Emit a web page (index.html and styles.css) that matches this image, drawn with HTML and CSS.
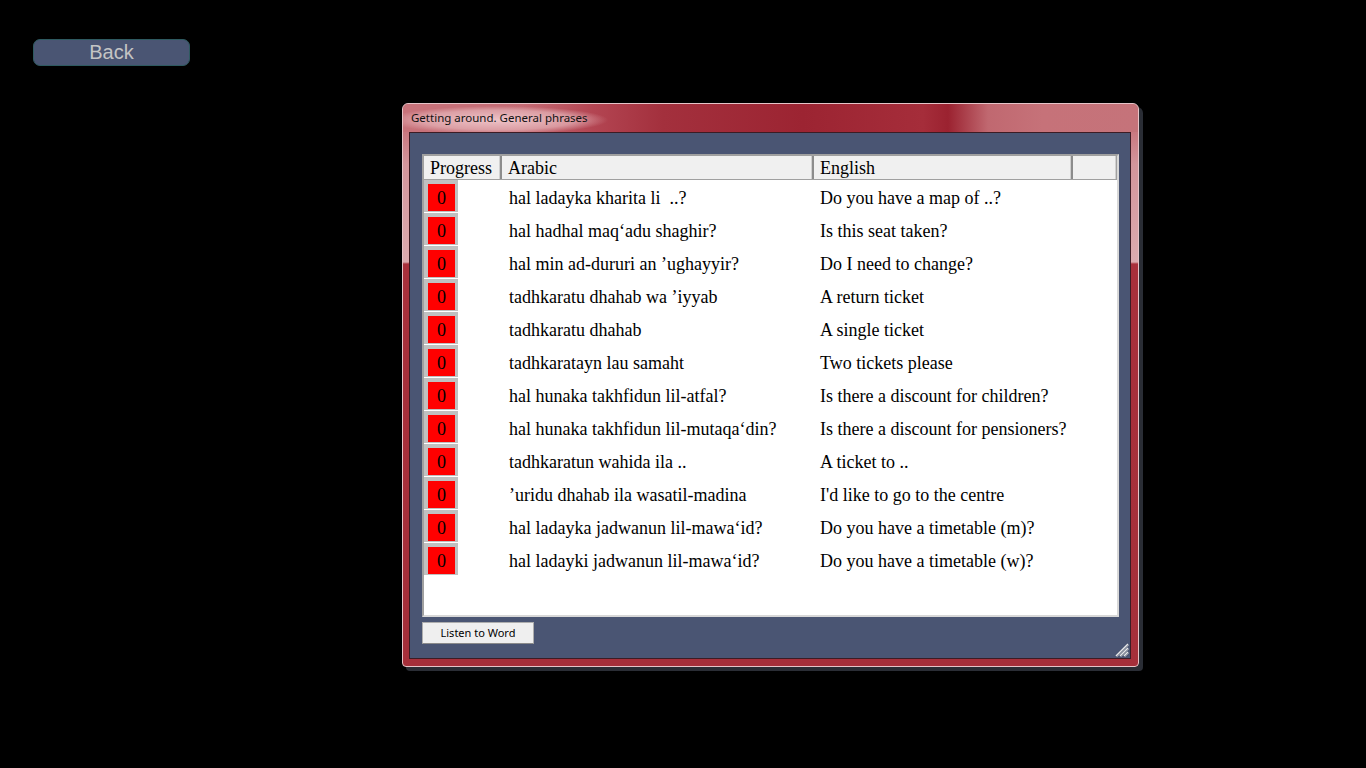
FILE: index.html
```html
<!DOCTYPE html>
<html>
<head>
<meta charset="utf-8">
<link rel="stylesheet" href="styles.css">
</head>
<body>
<div class="page">
  <div class="back">Back</div>
  <div class="window">
    <div class="titlebar">Getting around. General phrases</div>
    <div class="client">
      <div class="list">
        <div class="head">
          <div class="hc c1">Progress</div>
          <div class="hc c2">Arabic</div>
          <div class="hc c3">English</div>
          <div class="hc c4"></div>
        </div>
        <div class="rows">
          <div class="row"><div class="prog"><span class="box">0</span></div><div class="c2 t">hal ladayka kharita li &nbsp;..?</div><div class="c3 t">Do you have a map of ..?</div></div>
          <div class="row"><div class="prog"><span class="box">0</span></div><div class="c2 t">hal hadhal maq‘adu shaghir?</div><div class="c3 t">Is this seat taken?</div></div>
          <div class="row"><div class="prog"><span class="box">0</span></div><div class="c2 t">hal min ad-dururi an ’ughayyir?</div><div class="c3 t">Do I need to change?</div></div>
          <div class="row"><div class="prog"><span class="box">0</span></div><div class="c2 t">tadhkaratu dhahab wa ’iyyab</div><div class="c3 t">A return ticket</div></div>
          <div class="row"><div class="prog"><span class="box">0</span></div><div class="c2 t">tadhkaratu dhahab</div><div class="c3 t">A single ticket</div></div>
          <div class="row"><div class="prog"><span class="box">0</span></div><div class="c2 t">tadhkaratayn lau samaht</div><div class="c3 t">Two tickets please</div></div>
          <div class="row"><div class="prog"><span class="box">0</span></div><div class="c2 t">hal hunaka takhfidun lil-atfal?</div><div class="c3 t">Is there a discount for children?</div></div>
          <div class="row"><div class="prog"><span class="box">0</span></div><div class="c2 t">hal hunaka takhfidun lil-mutaqa‘din?</div><div class="c3 t">Is there a discount for pensioners?</div></div>
          <div class="row"><div class="prog"><span class="box">0</span></div><div class="c2 t">tadhkaratun wahida ila ..</div><div class="c3 t">A ticket to ..</div></div>
          <div class="row"><div class="prog"><span class="box">0</span></div><div class="c2 t">’uridu dhahab ila wasatil-madina</div><div class="c3 t">I'd like to go to the centre</div></div>
          <div class="row"><div class="prog"><span class="box">0</span></div><div class="c2 t">hal ladayka jadwanun lil-mawa‘id?</div><div class="c3 t">Do you have a timetable (m)?</div></div>
          <div class="row"><div class="prog"><span class="box">0</span></div><div class="c2 t">hal ladayki jadwanun lil-mawa‘id?</div><div class="c3 t">Do you have a timetable (w)?</div></div>
        </div>
      </div>
      <div class="bottom">
        <div class="btn">Listen to Word</div>
        <svg class="grip" width="16" height="16" viewBox="0 0 16 16">
          <path d="M15 3 L3 15 M15 7 L7 15 M15 11 L11 15" stroke="#e8e8e8" stroke-width="1.5"/>
          <path d="M16 4 L4 16 M16 8 L8 16 M16 12 L12 16" stroke="#8a8f9c" stroke-width="1"/>
        </svg>
      </div>
    </div>
  </div>
</div>
</body>
</html>
```
FILE: styles.css
```css
html, body {
  margin: 0;
  padding: 0;
  background: #000;
}
.page {
  width: 1366px;
  height: 768px;
  padding: 39px 0 0 33px;
  box-sizing: border-box;
}
.back {
  width: 157px;
  height: 27px;
  box-sizing: border-box;
  background: #4a5573;
  border: 1px solid #2e5a60;
  border-radius: 7px;
  color: #c4c4c4;
  font-family: "Liberation Sans", Arial, sans-serif;
  font-size: 20px;
  line-height: 25px;
  text-align: center;
}
.window {
  margin: 37px 0 0 369px;
  width: 737px;
  height: 564px;
  box-sizing: border-box;
  border-radius: 6px 6px 4px 4px;
  border: 1px solid #e6c4c8;
  background:
    linear-gradient(180deg, #c56b74 0px, #c97880 28px, #d3959b 60px, #dcabaf 158px, #a8303b 160px, #a52f3a 100%);
  box-shadow: 4px 4px 0 #2a2d35;
  padding: 0 7px 7px 6px;
  display: flex;
  flex-direction: column;
}
.titlebar {
  height: 28px;
  flex: none;
  margin: 0 -7px 0 -6px;
  padding-left: 8px;
  box-sizing: border-box;
  font-family: "Noto Sans", "Open Sans", sans-serif;
  font-size: 11.5px;
  line-height: 28px;
  color: #111;
  border-radius: 6px 6px 0 0;
  background:
    radial-gradient(ellipse 110px 14px at 95px 16px, rgba(240,200,204,0.95) 0%, rgba(230,180,185,0.7) 70%, rgba(230,180,185,0) 100%),
    linear-gradient(90deg, #c8737b 0px, #c46a73 120px, #b34552 190px, #a3303d 260px, #9c2432 400px, #a52d3a 520px, #9b2230 545px, #c06870 585px, #c67279 640px, #c5737a 100%);
}
.client {
  flex: 1;
  background: #4a5573;
  border: 1px solid #3c1c24;
  padding: 21px 11px 0 12px;
  display: flex;
  flex-direction: column;
}
.list {
  height: 463px;
  box-sizing: border-box;
  background: #fff;
  border: 2px solid #d8d8d8;
  border-top-color: #a0a0a0;
  border-left-color: #a0a0a0;
  display: flex;
  flex-direction: column;
  font-family: "Liberation Serif", "Times New Roman", serif;
  font-size: 18px;
  color: #000;
}
.head {
  display: flex;
  height: 24px;
  flex: none;
  background: #f0f0f0;
  border-bottom: 1px solid #a0a0a0;
  box-sizing: border-box;
}
.hc {
  box-sizing: border-box;
  height: 23px;
  line-height: 25px;
  padding-left: 6px;
  border-right: 2px solid #8c8c8c;
  box-shadow: inset -1px 0 0 #d0d0d0;
}
.c1 { width: 78px; }
.c2 { width: 312px; }
.c3 { width: 259px; }
.c4 { width: 44px; border-right: 1px solid #a0a0a0; }
.rows {
  display: flex;
  flex-direction: column;
}
.row {
  display: flex;
  height: 33px;
  align-items: stretch;
}
.prog {
  width: 78px;
  box-sizing: border-box;
}
.box {
  display: block;
  width: 34px;
  height: 32px;
  box-sizing: border-box;
  background: #ff0000;
  border: solid #c0c0c0;
  border-width: 4px 3px 1px 4px;
  text-align: center;
  line-height: 28px;
}
.t {
  box-sizing: border-box;
  padding-left: 7px;
  line-height: 37px;
  white-space: nowrap;
}
.c3.t { padding-left: 6px; }
.bottom {
  flex: 1;
  display: flex;
  align-items: flex-start;
  justify-content: space-between;
  padding-top: 5px;
  margin-right: -11px;
}
.btn {
  width: 112px;
  height: 22px;
  box-sizing: border-box;
  background: #efefef;
  border: 1px solid #adadad;
  border-bottom-color: #8a8a8a;
  font-family: "Noto Sans", "Open Sans", sans-serif;
  font-size: 11px;
  line-height: 20px;
  text-align: center;
  color: #000;
}
.grip {
  align-self: flex-end;
  margin-bottom: 1px;
  margin-right: 1px;
}
```
